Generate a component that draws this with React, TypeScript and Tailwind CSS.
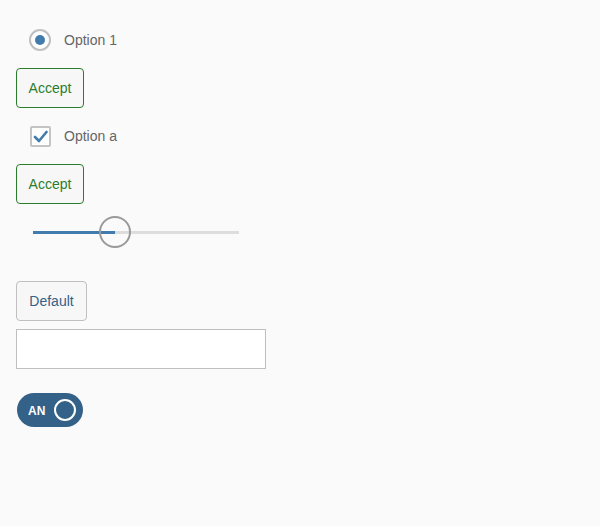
import React from 'react';

export default function App() {
  return (
    <div className="min-h-[526px] w-full bg-[#fafafa] p-4 font-['Liberation_Sans',Arial,sans-serif] text-sm">
      <div className="flex flex-col items-start">
        {/* Radio button */}
        <div className="flex h-12 items-center">
          <span className="ml-[13px] flex h-[22px] w-[22px] items-center justify-center rounded-full border-2 border-[#bfbfbf] bg-white">
            <span className="h-[10px] w-[10px] rounded-full bg-[#427cac]" />
          </span>
          <span className="ml-[13px] text-[#666666]">Option 1</span>
        </div>

        <button className="mt-1 flex h-10 w-[68px] items-center justify-center rounded-[4px] border border-[#2b7d2b] bg-[#f7f7f7] text-[#2b7d2b]">
          Accept
        </button>

        {/* Checkbox */}
        <div className="mt-1 flex h-12 items-center">
          <span className="ml-[14px] flex h-[21px] w-[21px] items-center justify-center rounded-[2px] border-2 border-[#c4c4c4] bg-white">
            <svg width="15" height="13" viewBox="0 0 15 13" fill="none">
              <path d="M2 7 L6 11 L13.5 2" stroke="#427cac" strokeWidth="2.6" strokeLinecap="round" strokeLinejoin="round" />
            </svg>
          </span>
          <span className="ml-[13px] text-[#666666]">Option a</span>
        </div>

        <button className="mt-1 flex h-10 w-[68px] items-center justify-center rounded-[4px] border border-[#2b7d2b] bg-[#f7f7f7] text-[#2b7d2b]">
          Accept
        </button>

        {/* Slider */}
        <div className="flex h-14 items-center">
          <div className="relative ml-[17px] h-[3px] w-[206px] bg-[#dddddd]">
            <div className="h-full w-[82px] bg-[#427cac]" />
            <div className="absolute left-[66px] top-[-14.5px] h-8 w-8 rounded-full border-2 border-[#999999]" />
          </div>
        </div>

        <button className="mt-[21px] flex h-10 w-[71px] items-center justify-center rounded-[4px] border border-[#bfbfbf] bg-[#f7f7f7] text-[#346187]">
          Default
        </button>

        <input className="mt-2 h-10 w-[250px] border border-[#bfbfbf] bg-white px-2 text-[#333333] outline-none" />

        {/* Switch */}
        <div className="ml-px mt-6 flex h-[34px] w-[66px] items-center rounded-full bg-[#346187]">
          <span className="ml-[11px] mt-[4px] text-[12px] font-bold text-white">AN</span>
          <span className="ml-[9px] h-[22px] w-[22px] rounded-full border-2 border-white" />
        </div>
      </div>
    </div>
  );
}
